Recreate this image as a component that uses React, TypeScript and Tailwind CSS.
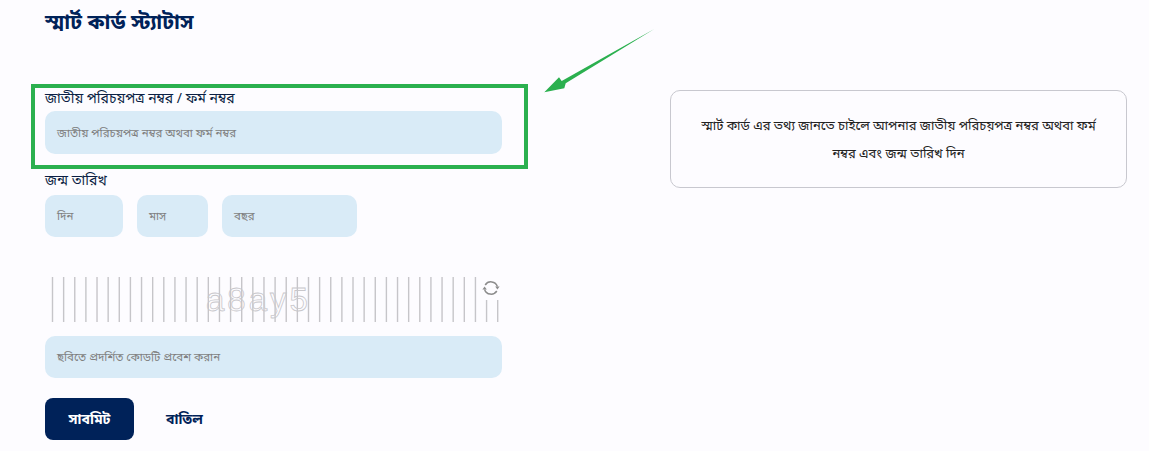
import React from 'react';

const fieldClass = 'h-[43px] rounded-[10px] bg-[#d9ebf7] flex items-center px-3 text-[11.5px] text-[#7f7f7f]';

const SyncIcon = () => (
  <svg width="18" height="18" viewBox="0 0 18 18" fill="none" stroke="#8c8c8c" strokeWidth="1.5">
    <path d="M3.2 6A6.8 6.8 0 0 1 15.4 7.6" />
    <path d="M14.8 12A6.8 6.8 0 0 1 2.6 10.4" />
    <polygon points="13.2,7.6 17.6,7.6 15.4,10.6" fill="#8c8c8c" stroke="none" />
    <polygon points="0.4,10.4 4.8,10.4 2.6,7.4" fill="#8c8c8c" stroke="none" />
  </svg>
);

const Captcha = () => {
  const lines = Array.from({ length: 41 }, (_, i) => 7.5 + i * 11.13);
  return (
    <div className="relative h-[46px] w-[457px]">
      <svg width="457" height="46" className="block">
        {lines.map((x, i) => (
          <line key={i} x1={x} y1={x > 435 ? 23 : 0} x2={x} y2="45" stroke="#c6c5c9" strokeWidth="1.4" />
        ))}
        <text x="161" y="34" fontFamily="'Liberation Sans', sans-serif" fontSize="33" letterSpacing="3" fill="none" stroke="#c8c7cb" strokeWidth="0.8">a8ay5</text>
      </svg>
      <div className="absolute right-[2px] top-[2px]">
        <SyncIcon />
      </div>
    </div>
  );
};

export default function App() {
  return (
    <div className="relative w-[1149px] h-[451px] overflow-hidden bg-[#fdfcff] font-['Noto_Sans','Noto_Sans_Bengali','Lohit_Bengali',sans-serif] flex">
      <div className="w-[457px] ml-[45px] flex flex-col">
        <h1 className="mt-[6px] h-[32px] leading-[30px] text-[21px] font-bold text-[#002259]">স্মার্ট কার্ড স্ট্যাটাস</h1>

        <label className="mt-[50px] h-[23px] leading-[19px] text-[14px] text-[#0b1f44]">জাতীয় পরিচয়পত্র নম্বর / ফর্ম নম্বর</label>
        <div className={fieldClass}>জাতীয় পরিচয়পত্র নম্বর অথবা ফর্ম নম্বর</div>

        <label className="mt-[15px] h-[26px] leading-[22px] text-[14px] text-[#0b1f44]">জন্ম তারিখ</label>
        <div className="flex gap-[14px]">
          <div className={`${fieldClass} w-[78px] !h-[42px]`}>দিন</div>
          <div className={`${fieldClass} w-[71px] !h-[42px]`}>মাস</div>
          <div className={`${fieldClass} w-[135px] !h-[42px]`}>বছর</div>
        </div>

        <div className="mt-[40px]">
          <Captcha />
        </div>

        <div className={`${fieldClass} mt-[13px] !h-[42px]`}>ছবিতে প্রদর্শিত কোডটি প্রবেশ করান</div>

        <div className="mt-[20px] flex items-center">
          <button className="w-[89px] h-[42px] rounded-[8px] bg-[#002259] text-white text-[14px] font-bold pb-[2px]">সাবমিট</button>
          <button className="ml-[32px] text-[14px] font-bold text-[#002259] pb-[2px]">বাতিল</button>
        </div>
      </div>

      <div className="ml-[168px] mt-[90px] w-[457px] h-[98px] rounded-[10px] border border-[#c8c8cf] flex items-center justify-center px-6 text-center text-[13px] leading-[28px] text-[#222222]">
        স্মার্ট কার্ড এর তথ্য জানতে চাইলে আপনার জাতীয় পরিচয়পত্র নম্বর অথবা ফর্ম নম্বর এবং জন্ম তারিখ দিন
      </div>

      {/* green annotation over the screenshot */}
      <div className="absolute left-[31px] top-[84px] w-[497px] h-[85px] border-[4px] border-[#2bb04f]" />
      <svg className="absolute left-[540px] top-[24px]" width="120" height="74" viewBox="0 0 120 74">
        <polygon points="114.3,5 25.7,59.3 24.3,64.3 4.3,68.3 19,53.3 21.7,57" fill="#2bb04f" />
      </svg>
    </div>
  );
}
